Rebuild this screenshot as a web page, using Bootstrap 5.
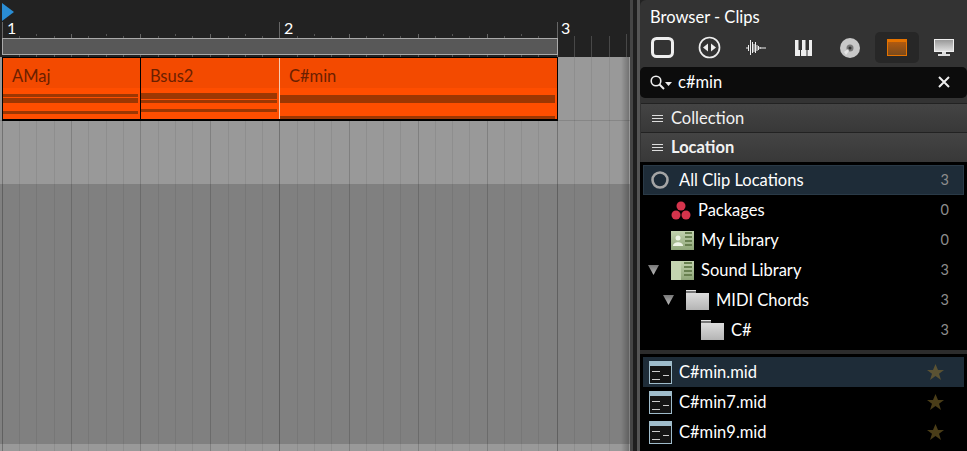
<!DOCTYPE html>
<html lang="en"><head><meta charset="utf-8"><title>Browser - Clips</title>
<link rel="stylesheet" href="https://cdn.jsdelivr.net/npm/bootstrap@5.3.0/dist/css/bootstrap.min.css">
<style>
html,body{height:451px;overflow:hidden;background:#222;font-family:"Lato",sans-serif;color:#fff}
.app-frame{width:967px;height:451px}
.arrange{width:630px;height:451px;background:#222}
.ruler{height:57px;background:#222;position:relative}
.ruler-num{position:absolute;top:19px;font-size:16px;line-height:18px;color:#fff}
.rn1{left:7px}.rn2{left:284px}.rn3{left:561px}
.ruler-lines{position:absolute;left:0;top:0}
.loop-bar{position:absolute;left:2px;top:38px;width:556px;height:17px;background:#585858;border:1px solid #aaa}
.play-mark{position:absolute;left:2px;top:3px}
.lanes{height:394px;position:relative;background:linear-gradient(#999 0,#999 127px,#808080 127px,#808080 387px,#999 387px)}
.lanes-grid{position:absolute;left:0;top:0}
.clip-row{position:relative;margin-left:2px;height:64px;width:556px;border:1px solid #000;border-width:1px 1px 2px 1px;background:#000}
.clip-cell{position:relative;height:100%;background:#ff4e00;overflow:hidden}
.c-a{width:137px}.c-b{width:138px}
.clip-sep{width:1px;flex:none;background:#000}
.clip-sep-lit{background:#f6c9b0}
.clip-head{height:30px;background:#f34a00;font-size:16.5px;line-height:20px;color:#6b2000;padding:8px 0 0 9px}
.note{position:absolute;background:#9c3703;left:0;right:2px}
.n1{top:36px;height:3px}.n2{top:40px;height:5px}.n3{top:53px;height:3px}
.n4{top:35px;height:6px}.n5{top:42px;height:3px}.n6{top:51px;height:3px}
.n7{top:37px;height:8px}.n8{top:58px;height:3px}
.side-shade{position:absolute;right:1px;top:0;bottom:0;width:8px;background:linear-gradient(90deg,rgba(0,0,0,0),rgba(0,0,0,.25))}
.sash{width:10px;height:451px;background:linear-gradient(90deg,#454545 0 3px,#1f1f1f 3px 7px,#555 7px)}
.panel-side{width:327px;height:451px;background:#333;border-top-left-radius:6px}
.panel-title{font-size:16.5px;line-height:18px;color:#fff;padding:8px 0 0 10px;height:32px}
.tabs{height:35px;padding-right:1px}
.tab-btn{width:44px;height:31px;border-radius:5px}
.tab-on{background:#272727}
.search-box{height:31px;background:#0c0c0c;border-radius:5px;font-size:16.5px;line-height:20px;padding:0 17px 1px 10px}
.search-text{margin-left:6px}
.search-gap{height:5px}
.section-head{height:29px;background:linear-gradient(#444,#383838);border-top:1px solid #222;font-size:16.5px;color:#f2f2f2;padding-left:11px;margin-left:1px;gap:9px}
.section-tall{height:30px}
.section-text{margin-left:-1px}
.burger{width:11px;height:7px;border-top:1px solid #ddd;border-bottom:1px solid #ddd;position:relative}
.burger::after{content:"";position:absolute;left:0;right:0;top:2px;height:1px;background:#ddd}
.tree{background:#000;height:188px;padding:3px 0 0 3px}
.tree-row{height:30px;font-size:16.5px;padding-right:15px;margin-right:3px}
.tree-on{background:#1e2c38;border:1px solid #2a3a47;padding-right:14px}
.tree-count{margin-left:auto;font-size:14.5px;color:#8d8d8d}
.pane-gap{height:4px;background:#2c2c2c}
.files{background:#000;height:97px;padding:3px 0 0 3px}
.file-on{background:#1e2c38}
.file-row{height:30px;font-size:16.5px;margin-right:3px;padding-right:20px}
.ico{flex:none;display:block}
.i-all{margin-left:7px}.t-all{margin-left:10px}
.i-top{margin-left:28px}
.t-pkg{margin-left:7px}.t-lib{margin-left:7px}
.tri1{margin-left:5px}.tri2{margin-left:20px}
.after-tri{margin-left:12px}
.i-c{margin-left:58px}
.i-file{margin-left:6px}
</style></head><body>
<div class="app-frame d-flex">
<div class="arrange flex-shrink-0">
 <div class="ruler">
  <svg class="ruler-lines" width="630" height="57"><path d="M19.5 38v-2M36.5 36v-2M54.5 38v-2M88.5 38v-2M106.5 36v-2M123.5 38v-2M158.5 38v-2M175.500 36v-2M192.5 38v-2M228.5 38v-2M245.5 36v-2M262.5 38v-2M297.5 38v-2M314.5 36v-2M331.5 38v-2M366.5 38v-2M383.5 36v-2M400.5 38v-2M435.5 38v-2M452.5 36v-2M469.5 38v-2M504.5 38v-2M521.5 36v-2M538.5 38v-2M19.5 57v-2M36.5 57v-2M54.5 57v-2M71.5 57v-2M88.5 57v-2M106.5 57v-2M123.5 57v-2M140.5 57v-2M158.5 57v-2M175.500 57v-2M192.5 57v-2M210.5 57v-2M228.5 57v-2M245.5 57v-2M262.5 57v-2M297.5 57v-2M314.5 57v-2M331.5 57v-2M349.5 57v-2M366.5 57v-2M383.5 57v-2M400.5 57v-2M418.5 57v-2M435.5 57v-2M452.5 57v-2M469.5 57v-2M487.5 57v-2M504.5 57v-2M521.5 57v-2M538.5 57v-2" stroke="#555"/><path d="M71.5 38v-4M140.5 38v-4M210.5 38v-4M349.5 38v-4M418.5 38v-4M487.5 38v-4" stroke="#666"/><path d="M2.5 22V38M279.5 22V38M557.5 22V57" stroke="#666"/><path d="M574.5 36V57M591.5 36V57M609.5 36V57M626.5 34V57" stroke="#484848"/></svg>
  <span class="ruler-num rn1">1</span><span class="ruler-num rn2">2</span><span class="ruler-num rn3">3</span>
  <div class="loop-bar"></div>
  <svg class="play-mark" width="12" height="18"><path d="M0 0L12 9L0 18Z" fill="#2a8dd4"/></svg>
 </div>
 <div class="lanes">
  <svg class="lanes-grid" width="630" height="394"><path d="M19.5 0V394M36.5 0V394M54.5 0V394M88.5 0V394M106.5 0V394M123.5 0V394M158.5 0V394M175.5 0V394M192.5 0V394M228.5 0V394M245.5 0V394M262.5 0V394M297.5 0V394M314.5 0V394M331.5 0V394M366.5 0V394M383.5 0V394M400.5 0V394M435.5 0V394M452.5 0V394M469.5 0V394M504.5 0V394M521.5 0V394M538.5 0V394M574.5 0V394M591.5 0V394M609.5 0V394" stroke="#000" stroke-opacity=".07"/><path d="M71.5 0V394M140.5 0V394M210.5 0V394M349.5 0V394M418.5 0V394M487.5 0V394" stroke="#000" stroke-opacity=".16"/><path d="M2.5 0V394M279.5 0V394M557.5 0V394" stroke="#000" stroke-opacity=".25"/><path d="M0 63.5H630" stroke="#000" stroke-opacity=".12"/></svg>
  <div class="side-shade"></div>
  <div class="clip-row d-flex">
   <div class="clip-cell c-a"><div class="clip-head">AMaj</div><div class="note n1"></div><div class="note n2"></div><div class="note n3"></div></div>
   <div class="clip-sep"></div>
   <div class="clip-cell c-b"><div class="clip-head">Bsus2</div><div class="note n4"></div><div class="note n5"></div><div class="note n6"></div></div>
   <div class="clip-sep clip-sep-lit"></div>
   <div class="clip-cell flex-grow-1"><div class="clip-head">C#min</div><div class="note n7"></div><div class="note n8"></div></div>
  </div>
 </div>
</div>
<div class="sash flex-shrink-0"></div>
<div class="panel-side flex-shrink-0">
 <div class="panel-title">Browser - Clips</div>
 <div class="tabs d-flex justify-content-between align-items-start">
  <div class="tab-btn d-flex align-items-center justify-content-center"><svg class="ico" width="23" height="21"><rect x="1.5" y="1.5" width="20" height="18" rx="4" fill="#333" stroke="#eee" stroke-width="3"/></svg></div>
  <div class="tab-btn d-flex align-items-center justify-content-center"><svg class="ico" width="23" height="23"><circle cx="11.5" cy="11.5" r="10" fill="none" stroke="#eee" stroke-width="1.7"/><path d="M10 7.5v8l-5-4zM13 7.5v8l5-4z" fill="#eee"/></svg></div>
  <div class="tab-btn d-flex align-items-center justify-content-center"><svg class="ico" width="20" height="17"><path d="M0 9H2M2.500 6V12M4.500 1V16M6.500 3V14M8 5V13M9.500 3V14M11 6V12M12.500 7V11M14 8V10M14 9H20" stroke="#eee" stroke-width="1"/></svg></div>
  <div class="tab-btn d-flex align-items-center justify-content-center"><svg class="ico" width="17" height="16"><rect width="17" height="16" fill="#eee"/><path d="M3.500 0H7V10H3.500ZM10.500 0H14V10H10.500Z" fill="#333"/><path d="M5 10H6V16H5ZM11.500 10H12.500V16H11.500Z" fill="#333"/></svg></div>
  <div class="tab-btn d-flex align-items-center justify-content-center"><svg class="ico" width="20" height="20"><circle cx="10" cy="10" r="10" fill="#c8c8c8"/><circle cx="10" cy="10" r="3.500" fill="#777"/><circle cx="10" cy="10" r="1.500" fill="#333"/><path d="M4 14L8 11L9 13L6 17Z" fill="#e6e6e6"/></svg></div>
  <div class="tab-btn tab-on d-flex align-items-center justify-content-center"><svg class="ico" width="20" height="17"><defs><linearGradient id="orangeg" x1="0" x2="0" y1="0" y2="1"><stop offset="0" stop-color="#b05a10"/><stop offset="1" stop-color="#7a4a1c"/></linearGradient></defs><rect width="20" height="17" fill="#e57300"/><rect x="1" y="3" width="18" height="13" fill="url(#orangeg)"/></svg></div>
  <div class="tab-btn d-flex align-items-center justify-content-center"><svg class="ico" width="20" height="17"><defs><linearGradient id="scr" x1="0" x2="0" y1="0" y2="1"><stop offset="0" stop-color="#999"/><stop offset="1" stop-color="#ddd"/></linearGradient></defs><rect width="20" height="13" fill="#eee"/><rect x="1" y="1" width="18" height="11" fill="url(#scr)"/><path d="M8 13H12V15H8ZM4 15H16V17H4Z" fill="#ddd"/></svg></div>
 </div>
 <div class="search-box d-flex align-items-center">
  <svg class="ico" width="22" height="15"><circle cx="6" cy="6" r="4.800" fill="none" stroke="#eee" stroke-width="1.600"/><path d="M9.500 9.500L14 14" stroke="#eee" stroke-width="2"/><path d="M15 7H22L18.500 11Z" fill="#eee"/></svg>
  <span class="search-text">c#min</span>
  <svg class="ico ms-auto" width="12" height="12"><path d="M1 1L11 11M11 1L1 11" stroke="#eee" stroke-width="2"/></svg>
 </div>
 <div class="search-gap"></div>
 <div class="section-head d-flex align-items-center"><span class="burger"></span><span class="section-text">Collection</span></div>
 <div class="section-head section-tall d-flex align-items-center fw-bold"><span class="burger"></span><span class="section-text">Location</span></div>
 <div class="tree">
  <div class="tree-row tree-on d-flex align-items-center"><svg class="ico i-all" width="18" height="18"><circle cx="9" cy="9" r="7.500" fill="none" stroke="#a5a5a5" stroke-width="2.600"/></svg><span class="t-all">All Clip Locations</span><span class="tree-count">3</span></div>
  <div class="tree-row d-flex align-items-center"><svg class="ico i-top" width="20" height="19"><circle cx="10" cy="5" r="4.500" fill="#d5344c"/><circle cx="5" cy="14" r="4.500" fill="#d5344c"/><circle cx="15" cy="14" r="4.500" fill="#d5344c"/></svg><span class="t-pkg">Packages</span><span class="tree-count">0</span></div>
  <div class="tree-row d-flex align-items-center"><svg class="ico i-top" width="23" height="19"><defs><linearGradient id="libg" x1="0" x2="0" y1="0" y2="1"><stop offset="0" stop-color="#c2d2ae"/><stop offset="1" stop-color="#8fa679"/></linearGradient></defs><rect width="23" height="19" fill="url(#libg)"/><circle cx="7" cy="7" r="2.500" fill="#eef4e6"/><path d="M2 15C2 10 12 10 12 15Z" fill="#eef4e6"/><path d="M14 2H21M14 6H21M14 10H21M14 14H21" stroke="#688050" stroke-width="2"/></svg><span class="t-lib">My Library</span><span class="tree-count">0</span></div>
  <div class="tree-row d-flex align-items-center"><svg class="ico tri1" width="11" height="10"><defs><linearGradient id="trig" x1="0" x2="0" y1="0" y2="1"><stop offset="0" stop-color="#777"/><stop offset="1" stop-color="#bbb"/></linearGradient></defs><path d="M0 0H11L5.500 10Z" fill="url(#trig)"/></svg><svg class="ico after-tri" width="23" height="19"><rect width="23" height="19" fill="url(#libg)"/><rect width="10" height="19" fill="#c4d4b0"/><path d="M13 2H21M13 6H21M13 10H21M13 14H21" stroke="#688050" stroke-width="2"/></svg><span class="t-lib">Sound Library</span><span class="tree-count">3</span></div>
  <div class="tree-row d-flex align-items-center"><svg class="ico tri2" width="11" height="10"><path d="M0 0H11L5.500 10Z" fill="url(#trig)"/></svg><svg class="ico after-tri" width="23" height="20"><defs><linearGradient id="foldg" x1="0" x2="0" y1="0" y2="1"><stop offset="0" stop-color="#e4e4e4"/><stop offset="1" stop-color="#b4b4b4"/></linearGradient><g id="fold"><path d="M0 0H10V3H23V20H0Z" fill="url(#foldg)"/><path d="M0 1H10V3H0Z" fill="#777"/></g></defs><use href="#fold"/></svg><span class="t-lib">MIDI Chords</span><span class="tree-count">3</span></div>
  <div class="tree-row d-flex align-items-center"><svg class="ico i-c" width="23" height="20"><use href="#fold"/></svg><span class="t-lib">C#</span><span class="tree-count">3</span></div>
 </div>
 <div class="pane-gap"></div>
 <div class="files">
  <div class="file-row file-on d-flex align-items-center"><svg class="ico i-file" width="23" height="23"><g id="mid"><rect width="23" height="23" fill="#9fbccb"/><rect x="1" y="5" width="21" height="17" fill="#141414"/><path d="M3 10.500H11M14 14.500H20M3 18.500H11" stroke="#ccc"/></g></svg><span class="t-lib">C#min.mid</span><svg class="ico ms-auto" width="17" height="16"><path d="M8.500 0L11 6H17L12 9.700L14 16L8.500 12L3 16L5 9.700L0 6H6Z" fill="#5a5233"/></svg></div>
  <div class="file-row d-flex align-items-center"><svg class="ico i-file" width="23" height="23"><use href="#mid"/></svg><span class="t-lib">C#min7.mid</span><svg class="ico ms-auto" width="17" height="16"><path d="M8.500 0L11 6H17L12 9.700L14 16L8.500 12L3 16L5 9.700L0 6H6Z" fill="#4a3d18"/></svg></div>
  <div class="file-row d-flex align-items-center"><svg class="ico i-file" width="23" height="23"><use href="#mid"/></svg><span class="t-lib">C#min9.mid</span><svg class="ico ms-auto" width="17" height="16"><path d="M8.500 0L11 6H17L12 9.700L14 16L8.500 12L3 16L5 9.700L0 6H6Z" fill="#4a3d18"/></svg></div>
 </div>
</div>
</div>
<script src="https://cdn.jsdelivr.net/npm/bootstrap@5.3.0/dist/js/bootstrap.bundle.min.js"></script>
</body></html>
